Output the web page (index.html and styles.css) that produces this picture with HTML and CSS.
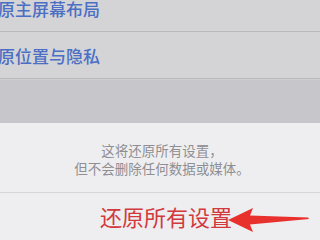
FILE: index.html
```html
<!DOCTYPE html>
<html lang="zh-CN">

<head>
    <meta charset="UTF-8">
    <meta name="viewport" content="width=device-width, initial-scale=1.0">
    <title>还原</title>
    <link rel="stylesheet" href="styles.css">
</head>

<body>
    <div class="screen">
        <div class="list">
            <div class="row first"><span class="row-text">还原主屏幕布局</span></div>
            <div class="row"><span class="row-text">还原位置与隐私</span></div>
        </div>
        <div class="dim"></div>
        <div class="sheet">
            <div class="sheet-message">
                <p>这将还原所有设置，</p>
                <p>但不会删除任何数据或媒体。</p>
            </div>
            <div class="sheet-action">
                <span class="action-text">还原所有设置</span>
            </div>
        </div>
        <!-- red arrow pointing at the button -->
        <svg class="arrow" width="90" height="30" viewBox="0 0 90 30">
            <path d="M2 14 L27 2 L24 9.5 L82 11.5 L83 13 L24 18.5 L27 26 Z" fill="#e8302c" />
        </svg>
    </div>
</body>

</html>
```

FILE: styles.css
```css
body {
    margin: 0;
    font-family: "Noto Sans CJK SC", "Noto Sans", sans-serif;
}

.screen {
    position: relative;
    width: 320px;
    height: 240px;
    overflow: hidden;
    background-color: #eeeef0;
}

.list {
    background-color: #d4d4d6;
}

.row {
    height: 46px;
    display: flex;
    align-items: center;
    border-bottom: 1px solid #b9b9bc;
}

.row.first {
    margin-top: -15px;
}

.row-text {
    margin-left: -19px;
    font-size: 17px;
    font-weight: 500;
    color: #4a6fc4;
    white-space: nowrap;
}

.dim {
    height: 43px;
    background-color: #c7c6cb;
    border-top: 1px solid #cfcfd2;
}

.sheet {
    background-color: #eeeef0;
}

.sheet-message {
    height: 70px;
    display: flex;
    flex-direction: column;
    justify-content: center;
    align-items: center;
    gap: 1px;
    padding-left: 4px;
    padding-top: 4px;
    box-sizing: border-box;
    border-bottom: 1px solid #d5d5d8;
}

.sheet-message p {
    margin: 0;
    font-size: 13.5px;
    line-height: 17px;
    color: #8e8e93;
}

.sheet-action {
    height: 57px;
    display: flex;
    justify-content: center;
    align-items: center;
    padding-left: 12px;
}

.action-text {
    font-size: 22px;
    color: #d2393d;
    margin-top: -12px;
}

.arrow {
    position: absolute;
    left: 226px;
    top: 206px;
}
```
